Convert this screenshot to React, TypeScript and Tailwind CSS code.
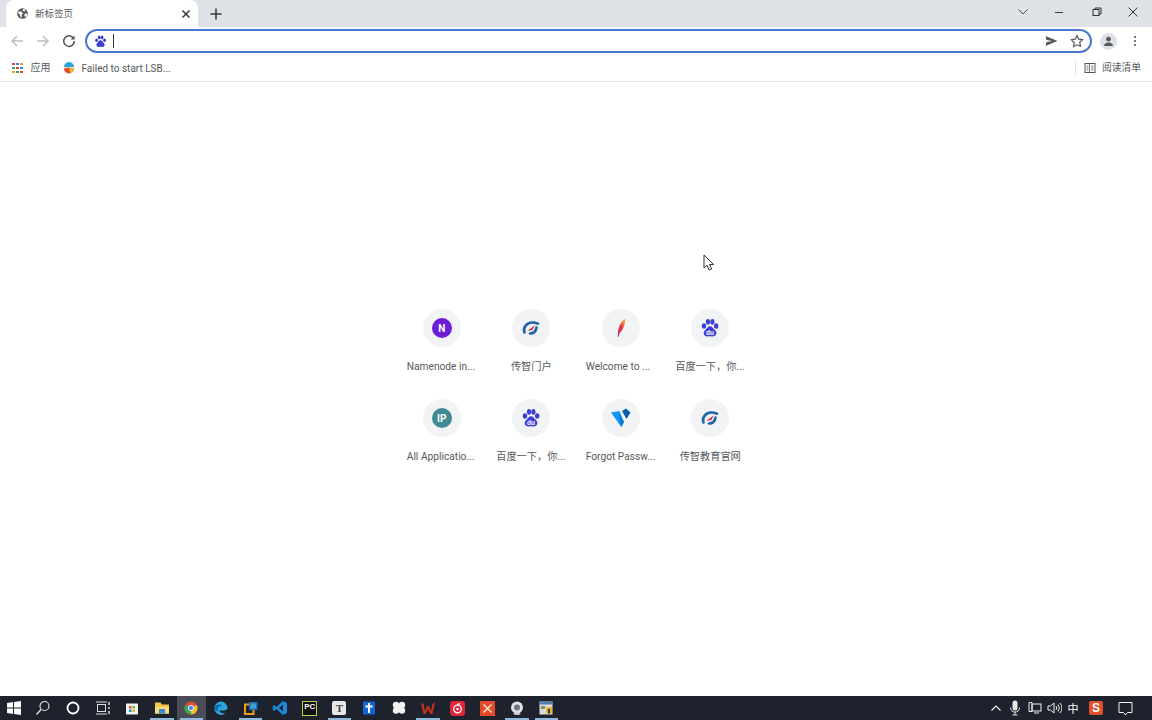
import React from "react";

const Baidu = ({ size = 20, du = true }: { size?: number; du?: boolean }) => (
  <svg width={size} height={size} viewBox="0 0 20 20" fill="#3b3fd8">
    <ellipse cx="4" cy="8" rx="2.2" ry="2.8" />
    <ellipse cx="8" cy="3.8" rx="2.1" ry="2.9" />
    <ellipse cx="12.4" cy="3.8" rx="2.1" ry="2.9" />
    <ellipse cx="16.2" cy="8" rx="2.2" ry="2.8" />
    <path d="M10 8.2c2.2 0 3 2 4.4 3.2 1.5 1.3 2.3 2.5 1.9 4.3-.5 2.3-2.6 3-4.5 2.7-1.2-.2-2.4-.2-3.6 0-2 .3-4-.5-4.4-2.7-.3-1.8.5-3 1.9-4.3C7 10.200 7.800 8.200 10 8.200z" />
    {du && <text x="10" y="16.6" textAnchor="middle" fontSize="6.500" fontWeight="700" fill="#fff" fontFamily="Liberation Sans, sans-serif">du</text>}
  </svg>
);

const Chuanzhi = () => (
  <svg width="20" height="20" viewBox="0 0 20 20" fill="none">
    <path d="M3.500 14.500C1.500 9.500 6 4.500 11 4.500c2 0 4 .3 6 1.200" stroke="#1f63a8" strokeWidth="2.600" strokeLinecap="round" />
    <path d="M9 15.500c3.500 0 6-2.500 6.500-6" stroke="#1f63a8" strokeWidth="2.600" strokeLinecap="round" />
    <path d="M6.500 13L14 7l-2.500 5z" fill="#d9303a" />
  </svg>
);

const Feather = () => (
  <svg width="20" height="20" viewBox="0 0 20 20">
    <defs>
      <linearGradient id="fea" x1="0" y1="1" x2="0.600" y2="0">
        <stop offset="0" stopColor="#b5307f" />
        <stop offset="0.600" stopColor="#e8343f" />
        <stop offset="1" stopColor="#f59a3a" />
      </linearGradient>
    </defs>
    <path d="M14 1c.8 4-1.500 10-5.500 14.500L7.500 19l-.8-.3.300-3.300C7 10 9.500 3.500 14 1z" fill="url(#fea)" />
  </svg>
);

const Vuetify = () => (
  <svg width="20" height="20" viewBox="0 0 20 20">
    <path d="M0 4.500L8.500 3 13 14l-2.800 5z" fill="#1697f6" />
    <path d="M7.500 5.500L13 14l-2.800 5z" fill="#0f74c9" />
    <path d="M11 3l4-2.500 4.500 4L15.500 11z" fill="#0b5cad" />
  </svg>
);

const Letter = ({ c, t }: { c: string; t: string }) => (
  <div className={`flex h-5 w-5 items-center justify-center rounded-full text-[10px] font-bold text-white ${c}`}>{t}</div>
);

const tiles: { icon: React.ReactNode; label: string }[] = [
  { icon: <Letter c="bg-[#6d1ed4]" t="N" />, label: "Namenode in..." },
  { icon: <Chuanzhi />, label: "传智门户" },
  { icon: <Feather />, label: "Welcome to ..." },
  { icon: <Baidu />, label: "百度一下，你..." },
  { icon: <Letter c="bg-[#3f8a93]" t="IP" />, label: "All Applicatio..." },
  { icon: <Baidu />, label: "百度一下，你..." },
  { icon: <Vuetify />, label: "Forgot Passw..." },
  { icon: <Chuanzhi />, label: "传智教育官网" },
];

const Win = () => (
  <svg width="14" height="14" viewBox="0 0 14 14" fill="#fff">
    <path d="M0 2l6-.9V6.600H0zM7 1L14 0v6.600H7zM0 7.400h6v5.500L0 12zM7 7.400h7V14l-7-1z" />
  </svg>
);

const S = ({ children }: { children: React.ReactNode }) => (
  <svg width="16" height="16" viewBox="0 0 16 16" fill="none">{children}</svg>
);

const taskIcons: { el: React.ReactNode; on?: boolean; active?: boolean }[] = [
  { el: <Win /> },
  { el: <S><circle cx="9.500" cy="6" r="4.500" stroke="#ddd" strokeWidth="1.200" /><path d="M6 9.500L1.500 14.500" stroke="#ddd" strokeWidth="1.400" /></S> },
  { el: <S><circle cx="8" cy="8" r="5.500" stroke="#fff" strokeWidth="1.800" /></S> },
  { el: <S><rect x="2.500" y="4.500" width="8" height="7" stroke="#ddd" /><path d="M1 2h11M1 14h11" stroke="#ddd" /><path d="M14 2v3M14 7v2M14 11v3" stroke="#ddd" strokeWidth="1.500" /></S> },
  { el: <S><rect x="2" y="3.500" width="12" height="11" rx="1" fill="#f3f3f3" /><rect x="5" y="6" width="2.500" height="2.500" fill="#e0522b" /><rect x="8.500" y="6" width="2.500" height="2.500" fill="#6fb52c" /><rect x="5" y="9.500" width="2.500" height="2.500" fill="#1a8ad6" /><rect x="8.500" y="9.500" width="2.500" height="2.500" fill="#f2b90f" /></S> },
  { on: true, el: <S><path d="M1 2.500h5.500L8 4.500h7v9H1z" fill="#f4c542" /><rect x="1" y="7" width="14" height="6.500" fill="#fbdc7a" /><rect x="5" y="9" width="6" height="4.500" fill="#2f8fd0" /></S> },
  { on: true, active: true, el: <S><circle cx="8" cy="8" r="6.500" fill="#e0473a" /><path d="M8 8L13.600 4.700A6.500 6.500 0 0 1 8 14.500z" fill="#f2bd2c" /><path d="M8 8v6.500A6.500 6.500 0 0 1 2.400 4.700z" fill="#3aa655" /><circle cx="8" cy="8" r="3" fill="#fff" /><circle cx="8" cy="8" r="2.200" fill="#4a88e8" /></S> },
  { el: <S><path d="M1.500 8a6.500 6.500 0 0 1 13 0c0 1.500-1.500 2.500-3.500 2.500H6.500c0 2 2.500 3.500 6 2.500A6.500 6.500 0 0 1 1.500 8z" fill="#2aa5dc" /><path d="M1.500 8C2.500 4.500 7 3.500 9.500 6 6 5.500 4 8.500 5 11.500 3 11.500 1.700 10 1.500 8z" fill="#1368b8" /></S> },
  { on: true, el: <S><rect x="2" y="4.500" width="8.500" height="9.500" fill="none" stroke="#f09a1a" strokeWidth="2" /><rect x="6" y="2" width="8.500" height="8" fill="#1b6fb5" /><rect x="7.500" y="3.500" width="5.500" height="5" fill="#3fa0dc" /></S> },
  { el: <S><path d="M11 1l4 2v10l-4 2-6.500-6L2 11 .8 10V6L2 5l2.500 2z" fill="#1e88d8" /><path d="M11 4.500v7L7 8z" fill="#15233a" /></S> },
  { el: <div className="flex h-[15px] w-[15px] flex-col justify-start border border-[#bcd14a] bg-[#111] px-[1px] font-['Liberation_Sans',sans-serif] text-[8px] font-bold leading-[10px] text-white">PC</div> },
  { on: true, el: <div className="flex h-[14px] w-[14px] items-center justify-center rounded-[2px] bg-[#e8e8e8] font-['Liberation_Serif',serif] text-[11px] font-bold text-[#444]">T</div> },
  { el: <S><rect x="2" y="1.500" width="12" height="13" rx="1" fill="#1465d8" /><path d="M8 3v10M4.500 6.500h7" stroke="#fff" strokeWidth="2" /></S> },
  { el: <S><circle cx="5" cy="5" r="3.200" fill="#f2f2f2" /><circle cx="11" cy="5" r="3.200" fill="#f2f2f2" /><circle cx="5" cy="10.500" r="3.200" fill="#f2f2f2" /><circle cx="11" cy="10.500" r="3.200" fill="#f2f2f2" /><circle cx="8" cy="8" r="3" fill="#f2f2f2" /></S> },
  { on: true, el: <S><path d="M1 3l2.500 1 1.500 7 2-5h2l2 5 1.500-7L15 2l-2.500 12h-2L8 9l-2.500 5h-2z" fill="#c9301e" /></S> },
  { el: <div className="flex h-[15px] w-[15px] items-center justify-center rounded-[3px] bg-[#e0263a]"><svg width="11" height="11" viewBox="0 0 11 11" fill="none"><circle cx="5.500" cy="6" r="3.800" stroke="#fff" strokeWidth="1.300" /><circle cx="5.500" cy="6" r="1.200" fill="#fff" /><path d="M5 1.500l3-.8" stroke="#fff" strokeWidth="1.200" /></svg></div> },
  { el: <div className="flex h-[15px] w-[15px] items-center justify-center bg-[#e4472a]"><svg width="11" height="11" viewBox="0 0 11 11"><path d="M1.500 1.500l8 8M9.500 1.500l-8 8" stroke="#fbe3c4" strokeWidth="1.600" /></svg></div> },
  { on: true, el: <S><circle cx="8" cy="7.500" r="6" fill="#e0e0e0" /><circle cx="8" cy="7.500" r="3" fill="#6f7480" /><path d="M4 13l8 0-2 2H6z" fill="#c8c8c8" /></S> },
  { on: true, el: <S><rect x="1.500" y="1.500" width="13" height="13" fill="#d9dcd8" /><rect x="1.500" y="1.500" width="13" height="3" fill="#4f7fb0" /><rect x="3" y="6" width="4" height="3" fill="#7a8f6a" /><rect x="8" y="7" width="6" height="6.500" fill="#e8b13a" /><rect x="10" y="9" width="2" height="4.500" fill="#3a3a30" /></S> },
];

export default function App() {
  return (
    <div className="flex h-[720px] w-[1152px] flex-col overflow-hidden bg-white font-['Roboto','Noto_Sans_CJK_SC',sans-serif] text-[#3c4043]">
      {/* tab strip */}
      <div className="flex h-[27px] shrink-0 items-end bg-[#dee1e6] pl-[6px]">
        <div className="flex h-[27px] w-[192px] items-center rounded-t-[8px] bg-white pl-[11px] pr-[4px]">
          <svg width="11" height="11" viewBox="0 0 12 12" className="shrink-0">
            <circle cx="6" cy="6" r="5.800" fill="#55595e" />
            <path d="M2 3.500l3 .5 1.500 2-1.500 1.500.5 3.500-2-2-.5-2L1 5.500zM7 1l2.500 1-1 1.500H7L6 2.500zM8.500 6l2.800.3-1 3.500L8 9z" fill="#fff" />
          </svg>
          <span className="ml-[7px] text-[9.500px] leading-none text-[#55595d]">新标签页</span>
          <svg width="16" height="16" viewBox="0 0 16 16" className="ml-auto" fill="none">
            <path d="M4.500 4.500l7 7M11.500 4.500l-7 7" stroke="#34373b" strokeWidth="1.500" />
          </svg>
        </div>
        <svg width="14" height="14" viewBox="0 0 14 14" className="mb-[6px] ml-[11px]" fill="none">
          <path d="M7 1.500v11M1.500 7h11" stroke="#3c4043" strokeWidth="1.600" />
        </svg>
        <div className="mb-[3px] ml-auto flex h-[18px] items-center self-start pr-[14px] pt-[6px]">
          <svg width="12" height="12" viewBox="0 0 12 12" fill="none" className="mr-[26px]">
            <path d="M1.500 3.500L6 8l4.500-4.500" stroke="#4a4d52" strokeWidth="1" />
          </svg>
          <div className="mr-[29px] h-[1px] w-[8px] bg-[#35383c]" />
          <svg width="10" height="10" viewBox="0 0 10 10" fill="none" className="mr-[26px]">
            <rect x="1" y="2.500" width="6" height="6" stroke="#333" />
            <path d="M3 2.500V1h6v6H7" stroke="#333" />
          </svg>
          <svg width="10" height="10" viewBox="0 0 10 10" fill="none">
            <path d="M.5.500l9 9M9.500.500l-9 9" stroke="#333" />
          </svg>
        </div>
      </div>

      {/* toolbar */}
      <div className="flex h-[28px] shrink-0 items-center bg-white pl-[10px] pr-[16px]">
        <svg width="14" height="14" viewBox="0 0 14 14" fill="none">
          <path d="M13 7H2M7 2L2 7l5 5" stroke="#bcbfc3" strokeWidth="1.500" />
        </svg>
        <svg width="14" height="14" viewBox="0 0 14 14" fill="none" className="ml-[12px]">
          <path d="M1 7h11M7 2l5 5-5 5" stroke="#bcbfc3" strokeWidth="1.500" />
        </svg>
        <svg width="14" height="14" viewBox="0 0 14 14" fill="none" className="ml-[12px]">
          <path d="M11.600 4.500A5.300 5.300 0 1 0 12.300 7" stroke="#505458" strokeWidth="1.500" />
          <path d="M12.600 1.500v4h-4z" fill="#505458" />
        </svg>
        <div className="ml-[9px] flex h-[24px] flex-1 items-center rounded-full border-2 border-[#4a78cf] bg-white pl-[7px] pr-[6px]">
          <Baidu size={13} du={false} />
          <div className="ml-[6px] h-[14px] w-[1px] bg-[#333]" />
          <svg width="13" height="12" viewBox="0 0 13 12" className="ml-auto" fill="#55595d">
            <path d="M.500 1l12 5-12 5 1-4 6-1-6-1z" />
          </svg>
          <svg width="14" height="14" viewBox="0 0 14 14" fill="none" className="ml-[12px]">
            <path d="M7 1.500l1.700 3.600 3.900.5-2.900 2.700.8 3.900L7 10.800l-3.500 1.900.8-3.900L1.400 5.600l3.900-.5z" stroke="#55595d" strokeWidth="1.200" />
          </svg>
        </div>
        <div className="ml-[8px] flex h-[17px] w-[17px] items-center justify-center rounded-full bg-[#dfe1e8]">
          <svg width="11" height="11" viewBox="0 0 11 11" fill="#55585e">
            <circle cx="5.500" cy="3.200" r="2.400" />
            <path d="M1 10c0-2.400 2-3.600 4.500-3.600S10 7.600 10 10z" />
          </svg>
        </div>
        <div className="ml-[17px] flex flex-col gap-[2px]">
          <span className="h-[2px] w-[2px] rounded-full bg-[#4a4d52]" />
          <span className="h-[2px] w-[2px] rounded-full bg-[#4a4d52]" />
          <span className="h-[2px] w-[2px] rounded-full bg-[#4a4d52]" />
        </div>
      </div>

      {/* bookmarks */}
      <div className="flex h-[27px] shrink-0 items-center border-b border-[#e4e5e7] bg-white pl-[12px] pr-[11px] text-[10px] text-[#55595d]">
        <div className="grid grid-cols-3 gap-[1.500px]">
          {["#d9453a", "#3f7fe0", "#e0a82c", "#4a9a52", "#d9453a", "#3f7fe0", "#e0a82c", "#4a9a52", "#d9453a"].map((c, i) => (
            <span key={i} className="h-[2.500px] w-[2.500px]" style={{ background: c }} />
          ))}
        </div>
        <span className="ml-[8px] -translate-y-[1px]">应用</span>
        <svg width="12" height="12" viewBox="0 0 12 12" className="ml-[12px]">
          <circle cx="6" cy="6" r="5.500" fill="#e8e8ea" />
          <path d="M1 5a5 5 0 0 1 10 0z" fill="#2fa6d8" />
          <path d="M1 6.500l5-1 5 1a5 5 0 0 1-10 0z" fill="#e2482f" />
          <path d="M6 5.500l5 1A5 5 0 0 1 7 11z" fill="#f0b93a" />
        </svg>
        <span className="ml-[7px] text-[10px]">Failed to start LSB...</span>
        <div className="ml-auto h-[16px] w-[1px] bg-[#e4e5e7]" />
        <svg width="12" height="12" viewBox="0 0 12 12" fill="none" className="ml-[8px]">
          <rect x="1" y="1.500" width="10" height="9" stroke="#55595d" />
          <path d="M5.500 1.500v9M2.500 4h2M2.500 6h2M2.500 8h2M7 4h2.500M7 6h2.500M7 8h2.500" stroke="#55595d" strokeWidth="0.800" />
        </svg>
        <span className="ml-[6px] text-[9.750px]">阅读清单</span>
      </div>

      {/* content */}
      <div className="relative flex flex-1 justify-center bg-white pt-[227px]">
        <div className="grid h-fit w-[358px] grid-cols-4">
          {tiles.map((t, i) => (
            <div key={i} className="flex h-[90px] flex-col items-center">
              <div className="flex h-[38px] w-[38px] items-center justify-center rounded-full bg-[#f1f3f4]">{t.icon}</div>
              <span className={`mt-[13px] w-[70px] whitespace-nowrap text-[10.200px] leading-[14px] text-[#55595d] ${t.label.endsWith("...") ? "text-left" : "text-center"}`}>{t.label}</span>
            </div>
          ))}
        </div>
        <svg width="12" height="18" viewBox="0 0 12 18" className="absolute left-[703px] top-[172px]" fill="#fff">
          <path d="M1 1v13l3-2.800 2 4.800 2.600-1L6.600 10.500H10.500z" stroke="#333" strokeWidth="1" />
        </svg>
      </div>

      {/* taskbar */}
      <div className="flex h-[24px] shrink-0 items-stretch bg-[#1e222c] pl-0">
        <div className="-ml-[1px] flex items-stretch">
          {taskIcons.map((t, i) => (
            <div key={i} className={`relative flex w-[29.6px] items-center justify-center ${t.active ? "bg-[#4a4d55]" : ""}`}>
              {t.el}
              {t.on && <span className="absolute bottom-0 left-[3px] right-[3px] h-[2px] bg-[#8fb8dc]" />}
            </div>
          ))}
        </div>
        <div className="ml-auto flex items-center pr-[19px] text-[11px] text-white">
          <svg width="12" height="12" viewBox="0 0 12 12" fill="none">
            <path d="M1.500 8.500L6 4l4.500 4.500" stroke="#f0f0f0" strokeWidth="1.200" />
          </svg>
          <svg width="12" height="16" viewBox="0 0 12 16" className="ml-[7px]" fill="none">
            <rect x="3.500" y="0.500" width="5" height="10" rx="2.500" fill="#e8e8e8" />
            <path d="M1.500 7.500c0 3 2 4.500 4.500 4.500s4.500-1.500 4.500-4.500M6 12v3M3.500 15h5" stroke="#e8e8e8" />
          </svg>
          <svg width="14" height="14" viewBox="0 0 14 14" fill="none" className="ml-[7px]">
            <rect x="4" y="3" width="9" height="7" stroke="#f0f0f0" />
            <path d="M1 1.500h3v9H1zM6 12h5" stroke="#f0f0f0" />
          </svg>
          <svg width="15" height="14" viewBox="0 0 15 14" fill="none" className="ml-[5px]">
            <path d="M1 5h2.500L7 2v10L3.500 9H1z" stroke="#f0f0f0" />
            <path d="M9 5a3 3 0 0 1 0 4M11 3.500a5.500 5.500 0 0 1 0 7M13 2a8 8 0 0 1 0 10" stroke="#f0f0f0" />
          </svg>
          <span className="ml-[4px] w-[14px] text-center font-['Noto_Sans_CJK_SC',sans-serif] text-[11px] leading-none">中</span>
          <div className="ml-[9px] flex h-[14px] w-[14px] items-center justify-center rounded-[2px] bg-[#e4502a] font-['Liberation_Sans',sans-serif] text-[12px] font-bold leading-none">S</div>
          <svg width="15" height="15" viewBox="0 0 15 15" fill="none" className="ml-[15px]">
            <path d="M1 1.500h13v10H9.500L7.500 14l-2-2.500H1z" stroke="#f0f0f0" />
          </svg>
        </div>
      </div>
    </div>
  );
}
